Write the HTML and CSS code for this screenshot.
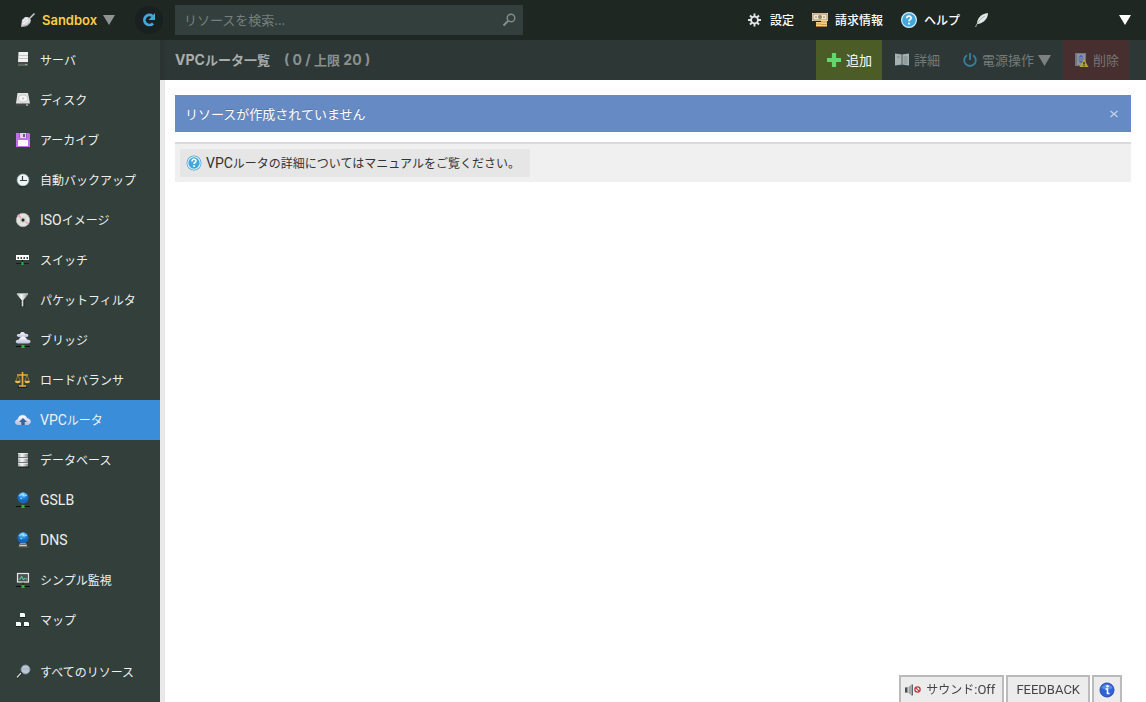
FILE: index.html
```html
<!DOCTYPE html>
<html lang="ja">
<head>
<meta charset="utf-8">
<title>VPCルータ一覧</title>
<link rel="stylesheet" href="styles.css">
</head>
<body>
<header class="topbar">
  <div class="brand">
    <button class="account" type="button">
      <svg class="icon" viewBox="0 0 16 16"><path d="M14.500 1.500L9 7" stroke="#c8c8cc" stroke-width="1.600"/><path d="M2 8l3-3 3 0 3 3-1 3-3 3-6 1z" fill="#d6d6dc"/><path d="M3 9l4-3M3 12l5-4" stroke="#fff"/><path d="M1.500 14.500l5.500-1 3-3" fill="none" stroke="#96969c"/></svg>
      <span class="account-name">Sandbox</span>
      <svg class="caret" viewBox="0 0 12 12"><path d="M0 1h12L6 11z" fill="#8f9492"/></svg>
    </button>
    <button class="reload" type="button" aria-label="更新">
      <svg class="icon" viewBox="0 0 16 16"><path d="M12 11.500A5 5 0 1 1 11.500 4" fill="none" stroke="#43a8d9" stroke-width="2.800"/><path d="M14 1v7H7.500z" fill="#43a8d9"/></svg>
    </button>
  </div>
  <div class="search">
    <input class="search-input" type="text" placeholder="リソースを検索..." aria-label="リソースを検索">
    <svg class="search-icon" viewBox="0 0 14 14"><circle cx="9" cy="5" r="3.800" fill="none" stroke="#858b89" stroke-width="1.400"/><path d="M6 8L1.500 12.500" stroke="#858b89" stroke-width="2.200"/></svg>
  </div>
  <nav class="menu" aria-label="メニュー">
    <a class="menu-link" href="#"><svg class="icon" viewBox="0 0 16 16"><circle cx="7.500" cy="8" r="3.400" fill="none" stroke="#e4e4e8" stroke-width="1.800"/><path d="M7.500 1.500v3M7.500 11.500v3M1 8h3M11 8h3M3 3.500l2 2M10 10.500l2 2M3 12.500l2-2M10 5.500l2-2" stroke="#e4e4e8" stroke-width="1.900"/></svg>設定</a>
    <a class="menu-link" href="#"><svg class="icon" viewBox="0 0 16 16"><path d="M0 1h16v8H0z" fill="#f3e5cc"/><path d="M1 2h14v6H1z" fill="none" stroke="#a88b66"/><circle cx="8" cy="5" r="2" fill="#9b8364"/><path d="M3 5h2M11 5h2" stroke="#9b8364"/><path d="M4 10h6v4H4zM9 8h6v6H9z" fill="#f5d08a"/><path d="M4 12h5M9 10h6M9 12.500h6M4 14.500h11" stroke="#c08a3a" stroke-width=".8"/></svg>請求情報</a>
    <a class="menu-link" href="#"><svg class="icon" viewBox="0 0 16 16"><use href="#help"/></svg>ヘルプ</a>
    <a class="menu-feather" href="#" aria-label="お知らせ"><svg class="icon" viewBox="0 0 16 16"><path d="M3 12C3 6 7 2 14 1c0 5-4 10-10 11z" fill="#e3e8e8"/><path d="M1.500 15C3.500 10 7 6 11 4" fill="none" stroke="#a3afad"/></svg></a>
  </nav>
  <button class="expand" type="button" aria-label="メニューを開く"><svg class="caret" viewBox="0 0 12 12"><path d="M0 1h12L6 11z" fill="#fff"/></svg></button>
</header>

<svg class="defs" aria-hidden="true">
  <defs>
    <linearGradient id="metal"><stop offset="0" stop-color="#a4a4a8"/><stop offset=".4" stop-color="#fafafa"/><stop offset="1" stop-color="#85858b"/></linearGradient>
    <linearGradient id="cloud" x2="0" y2="1"><stop offset="0" stop-color="#fff"/><stop offset="1" stop-color="#bcbcdc"/></linearGradient>
    <radialGradient id="globe" cx=".5" cy=".2"><stop offset="0" stop-color="#b5e7ff"/><stop offset=".5" stop-color="#359ff0"/><stop offset="1" stop-color="#1668bf"/></radialGradient>
    <g id="help"><circle cx="8" cy="8" r="7.400" fill="#43a8d9" stroke="#cfeefa" stroke-width="1.200"/><path d="M5.800 6.300c0-3 4.400-2.800 4.400-.300C10.200 7.500 8 7.500 8 9.300" fill="none" stroke="#fff" stroke-width="1.700"/><circle cx="8" cy="11.600" r="1.100" fill="#fff"/></g>
    <g id="link"><path d="M1 14.500h14" stroke="#0a100e"/><rect x="6.500" y="13" width="3" height="3" fill="#15c52e"/></g>
  </defs>
</svg>

<div class="layout">
  <nav class="sidebar" aria-label="リソース">
    <a class="item" href="#"><svg class="icon" viewBox="0 0 16 16"><path d="M3.500 0H13v11H3z" fill="#f0f0f0"/><path d="M4 3.500h9M4 6.500h9" stroke="#c5c5c5"/><path d="M3 10h10v4H3z" fill="#606362"/><path d="M3 11h10" stroke="#333736"/><path d="M10 12h2v1h-2z" fill="#79bd78"/></svg>サーバ</a>
    <a class="item" href="#"><svg class="icon" viewBox="0 0 16 16"><path d="M2.500 1h10.500l2 10.500H1z" fill="#e2e2e3"/><ellipse cx="8" cy="6.500" rx="4.500" ry="3.500" fill="#f5f5f5" stroke="#bcbcbc" stroke-width=".7"/><circle cx="8" cy="6.500" r="1.200" fill="#ccc"/><path d="M1 12h14v2H1z" fill="#404543"/><path d="M11 13h2" stroke="#ddd"/></svg>ディスク</a>
    <a class="item" href="#"><svg class="icon" viewBox="0 0 16 16"><path d="M1 1h13l1 1v13H1z" fill="#bf72e8"/><path d="M4 1h8v5H4z" fill="#a35bc9"/><path d="M5 1h6v5H5z" fill="#dfd2e7"/><path d="M8 2h2v3H8z" fill="#775790"/><path d="M3 8h10v6H3z" fill="#fff"/></svg>アーカイブ</a>
    <a class="item" href="#"><svg class="icon" viewBox="0 0 16 16"><circle cx="8" cy="8" r="5.900" fill="#eef5f5" stroke="#a9b8b7" stroke-width=".8"/><path d="M7.500 4v4.500H12M5 8.500h2" fill="none" stroke="#35413f" stroke-width="1.200"/><path d="M4 14.800h8" stroke="#202a28"/></svg>自動バックアップ</a>
    <a class="item" href="#"><svg class="icon" viewBox="0 0 16 16"><circle cx="8" cy="8" r="6.700" fill="#e4e4e2" stroke="#aeb2b0" stroke-width=".8"/><path d="M8 8L2 4l2-2zM8 8l5 5 1-2z" fill="#eda4c4"/><path d="M8 8l3-6 2 2zM8 8l-4 5-1-2z" fill="#d4e4c3"/><circle cx="8" cy="8" r="2.800" fill="#c7c9c7"/><circle cx="8" cy="8" r="1.500" fill="#202826"/></svg><span class="latin">ISO</span>イメージ</a>
    <a class="item" href="#"><svg class="icon" viewBox="0 0 16 16"><path d="M1 3h13v5H1z" fill="#fff"/><path d="M2.500 5H4v2H2.500zM5.500 5H7v2H5.500zM8.500 5H10v2H8.500zM11.500 5H13v2h-1.500z" fill="#3c4542"/><path d="M7.500 8v3M1 11.500h13" stroke="#151c19"/><path d="M6.500 10h2v3h-2z" fill="#15c52e"/></svg>スイッチ</a>
    <a class="item" href="#"><svg class="icon" viewBox="0 0 16 16"><path d="M7.500 7v8" stroke="#111817" stroke-width="3.600"/><path d="M1.500 2h12L8.500 8h-2z" fill="url(#metal)"/><path d="M7.500 7v7.500" stroke="#d7d7dc" stroke-width="1.800"/><path d="M2 1.800h11" stroke="#ddd"/></svg>パケットフィルタ</a>
    <a class="item" href="#"><svg class="icon" viewBox="0 0 16 16"><use href="#link"/><path d="M3 5c-3-3 0-3 2-3 1-3 5-2 5 0 4-1 4 3 2 3z" fill="url(#cloud)"/><path d="M3 11.500c-4-1-2-4 1-4 1-4 7-4 8 0 5 0 4 4 1 4z" fill="url(#cloud)"/></svg>ブリッジ</a>
    <a class="item" href="#"><svg class="icon" viewBox="0 0 16 16"><path d="M7.500 0v14M4 14h7M2 3h11" stroke="#e8ad39" stroke-width="1.700"/><path d="M3 3L.8 9h4.400zM12 3l-2.200 6h4.400z" fill="none" stroke="#a98434" stroke-width=".8"/><path d="M0 9h5.500c0 3-5.500 3-5.500 0M9.500 9H15c0 3-5.500 3-5.500 0" fill="#eebc55"/><path d="M3 15.500h9" stroke="#17201d"/></svg>ロードバランサ</a>
    <a class="item active" href="#" aria-current="page"><svg class="icon" viewBox="0 0 16 16"><path d="M3 12.500c-4 0-3-5 0-5 0-5 8-6 9-1 5 0 4 6 1 6z" fill="url(#cloud)" stroke="#ece8f3" stroke-width=".5"/><path d="M8 6L12 10H9.700v3H6.300v-3H4z" fill="#35639f"/></svg><span class="latin">VPC</span>ルータ</a>
    <a class="item" href="#"><svg class="icon" viewBox="0 0 16 16"><path d="M3 1h10v14H3z" fill="url(#metal)"/><path d="M3 5.500h10M3 10.500h10" stroke="#74797a"/><path d="M3 1.500h10M3 6.500h10M3 11.500h10" stroke="#eee" stroke-width=".7"/><path d="M3 15h11" stroke="#171e1c"/></svg>データベース</a>
    <a class="item" href="#"><svg class="icon" viewBox="0 0 16 16"><use href="#link"/><circle cx="8" cy="5.800" r="5.600" fill="url(#globe)"/><path d="M4 4l3-2 2 2 3-1M5 6l2 1" fill="none" stroke="#a9dcff"/></svg><span class="latin">GSLB</span></a>
    <a class="item" href="#"><svg class="icon" viewBox="0 0 16 16"><circle cx="8" cy="5.800" r="5.600" fill="url(#globe)"/><path d="M4 4l3-2 2 2 3-1M5 6l2 1" fill="none" stroke="#a9dcff"/><path d="M5 11.500h6l1 3H4z" fill="#e8e5e0"/><path d="M5 12.700h6M3 15h11" stroke="#555a58"/></svg><span class="latin">DNS</span></a>
    <a class="item" href="#"><svg class="icon" viewBox="0 0 16 16"><use href="#link"/><rect x="2.500" y="1.500" width="11" height="8.500" fill="#505356" stroke="#e6e6e6" stroke-width="1.200"/><path d="M3.500 7h2l1-3 2 4 1-2 1 1h2" fill="none" stroke="#57d3a1"/><path d="M8 10.500v2.500" stroke="#1a211f"/></svg>シンプル監視</a>
    <a class="item" href="#"><svg class="icon" viewBox="0 0 16 16"><path d="M5 1h4l1 1v3H5zM1 10h4l1 1v3H1zM9 10h4l1 1v3H9z" fill="#f6fffd"/><path d="M5 5.500h6M1 14.500h6M9 14.500h6" stroke="#1a2421"/></svg>マップ</a>
    <a class="item all" href="#"><svg class="icon" viewBox="0 0 16 16"><path d="M7 8L2 14" stroke="#171e1b" stroke-width="2.500"/><path d="M6 9L2 13.500" stroke="#d4d6d7" stroke-width="1.300"/><circle cx="10.500" cy="5.500" r="4.400" fill="#b8c8d5" stroke="#8b98a1"/><path d="M7.500 5h6" stroke="#a0b3c2"/></svg>すべてのリソース</a>
  </nav>

  <main class="main">
    <div class="toolbar">
      <h1 class="title"><span class="latin-title">VPC</span>ルータ一覧<span class="count"><span class="latin-title">( 0 / </span>上限<span class="latin-title"> 20 )</span></span></h1>
      <div class="actions">
        <button class="action add" type="button"><svg class="icon" viewBox="0 0 16 16"><path d="M8 1v14M1 8h14" stroke="#62d76d" stroke-width="4.200"/></svg>追加</button>
        <button class="action off" type="button" disabled><svg class="icon" viewBox="0 0 16 16"><path d="M0 2h2v12h14V3" fill="#283e46"/><path d="M1 1.500l7 1 7-1v12l-7-1-7 1z" fill="#a6b0b0"/><path d="M8 2.500v10" stroke="#485858"/><path d="M9.500 5h4M9.500 7h4M9.500 9h4M9.500 11h4M3 5h3" stroke="#71817e" stroke-width=".8"/></svg>詳細</button>
        <button class="action off" type="button" disabled><svg class="icon" viewBox="0 0 16 16"><path d="M5 3.200a5.800 5.800 0 1 0 6 0M8 1v7" fill="none" stroke="#357e9c" stroke-width="1.900"/></svg>電源操作<svg class="caret wide" viewBox="0 0 12 12"><path d="M0 1h12L6 11z" fill="#7c817f"/></svg></button>
        <button class="action delete" type="button" disabled><svg class="icon" viewBox="0 0 16 16"><path d="M2 1h11v13H2z" fill="#75777c"/><path d="M4 2h8v11H4z" fill="#8990a0"/><path d="M8 3l2 2H6zM8 11L6 9h4zM5 7h6" fill="#4d68a6" stroke="#4d68a6" stroke-width=".7"/><path d="M11 7l4.500 8h-9z" fill="#b3a236"/><path d="M11 10v2.500M11 13.200v1" stroke="#292819" stroke-width="1.300"/></svg>削除</button>
      </div>
    </div>
    <div class="content">
      <div class="notice" role="status"><span>リソースが作成されていません</span><button class="close" type="button" aria-label="閉じる"><svg class="close-icon" viewBox="0 0 8 8"><path d="M.5 1l7 6M7.500 1l-7 6" stroke="#c5d4ec" stroke-width="1.200"/></svg></button></div>
      <div class="manual"><a class="manual-link" href="#"><svg class="icon" viewBox="0 0 16 16"><circle cx="8" cy="8" r="7.500" fill="#43a8d9"/><circle cx="8" cy="8" r="6.200" fill="#43a8d9" stroke="#e6f4fa" stroke-width="1.100"/><path d="M6 6.500c0-3 4-2.700 4-.500C10 7.500 8 7.500 8 9" fill="none" stroke="#fff" stroke-width="1.600"/><circle cx="8" cy="11" r="1" fill="#fff"/></svg><span><span class="latin">VPC</span>ルータの詳細についてはマニュアルをご覧ください。</span></a></div>
    </div>
  </main>
</div>

<div class="dock">
  <button class="dock-button sound" type="button"><svg class="icon" viewBox="0 0 16 16"><path d="M0 5.500h3l4-3.500v12l-4-3.500H0z" fill="#a5a8ab"/><path d="M0 5.500h3v5H0z" fill="#4a4e51"/><path d="M3 5.500v5" stroke="#eee"/><path d="M7.500 2.500v11" stroke="#606468"/><circle cx="12.500" cy="7.500" r="2.600" fill="#fff" stroke="#c3343c" stroke-width="1.300"/><path d="M10.700 5.700l3.600 3.600" stroke="#c3343c" stroke-width="1.200"/></svg><span>サウンド<span class="latin-small">:Off</span></span></button>
  <button class="dock-button feedback" type="button"><span class="latin-small">FEEDBACK</span></button>
  <button class="dock-button info" type="button" aria-label="情報"><svg class="icon" viewBox="0 0 16 16"><circle cx="8" cy="8" r="7" fill="#2d62d9" stroke="#294aa5"/><path d="M2.500 6c2-5 9-5 11 0-3 2-7 2-11 0" fill="#5d8bec"/><circle cx="8.500" cy="4.300" r="1.200" fill="#fff"/><path d="M6.500 7h2v4.500h2" fill="none" stroke="#fff" stroke-width="1.600"/></svg></button>
</div>
</body>
</html>
```

FILE: styles.css
```css
* { box-sizing: border-box; }

body {
  margin: 0;
  min-height: 100vh;
  display: flex;
  flex-direction: column;
  background: #fff;
  color: #333;
  font: 12px/20px "Noto Sans CJK JP", sans-serif;
}

button, input { font: inherit; color: inherit; }
button { padding: 0; border: 0; background: none; }
a { color: inherit; text-decoration: none; }
.icon { width: 16px; height: 16px; flex: none; }
.caret { width: 12px; height: 12px; flex: none; }
.caret.wide { width: 13px; height: 13px; }
.defs { position: absolute; width: 0; height: 0; }
.latin { font-family: Roboto, sans-serif; font-size: 14px; }
.latin-small { font-family: Roboto, sans-serif; font-size: 13px; }
.latin-title { font-family: Inter, sans-serif; font-size: 14px; }

.topbar {
  display: flex;
  align-items: center;
  height: 40px;
  background: #1f2723;
  color: #fff;
}
.brand {
  width: 175px;
  padding: 0 12px 0 20px;
  display: flex;
  align-items: center;
  justify-content: space-between;
}
.account { display: flex; align-items: center; gap: 6px; }
.account-name { color: #ffcb4a; font: 600 13px/20px Inter, sans-serif; }
.reload {
  display: flex;
  align-items: center;
  justify-content: center;
  width: 28px;
  height: 28px;
  border-radius: 50%;
  background: #1a201f;
}
.search {
  display: flex;
  align-items: center;
  width: 348px;
  height: 30px;
  padding: 0 7px 0 9px;
  background: #333f3d;
}
.search-input {
  flex: 1;
  min-width: 0;
  padding: 0;
  border: 0;
  outline: 0;
  background: none;
  font-size: 13px;
}
.search-input::placeholder { color: #757f7c; opacity: 1; }
.search-icon { width: 14px; height: 14px; }
.menu {
  display: flex;
  flex: 1;
  align-items: center;
  justify-content: flex-end;
  gap: 18px;
  font-weight: 500;
}
.menu-link { display: flex; align-items: center; gap: 7px; }
.menu-feather { display: flex; margin-left: -4px; }
.expand { display: flex; margin: 0 15px 0 129px; }

.layout { display: flex; flex: 1; }
.sidebar { width: 160px; background: #323f3b; color: #eef0ef; }
.item {
  display: flex;
  align-items: center;
  height: 40px;
  padding-left: 15px;
}
.item .icon { margin-right: 9px; }
.item.active { background: #3a8dd8; }
.item.all { margin-top: 12px; }

.main { flex: 1; min-width: 0; display: flex; flex-direction: column; }
.toolbar {
  display: flex;
  align-items: center;
  justify-content: space-between;
  height: 40px;
  padding: 0 17px 0 10px;
  border-left: 5px solid #2b3432;
  background: #2d3836;
}
.title { margin: 0; color: #aaadac; font-size: 13px; line-height: 20px; font-weight: 700; white-space: pre; }
.count { margin-left: 14px; color: #8b908e; }
.actions { display: flex; }
.action {
  display: flex;
  align-items: center;
  gap: 4px;
  height: 40px;
  padding: 0 10px;
  font-size: 13px;
}
.add { background: #4c5c27; color: #fff; }
.off { color: #747a78; padding: 0 12px; }
.off + .off { padding: 0 12px 0 10px; }
.delete { background: #462f2e; color: #777675; }

.content { flex: 1; padding: 15px; padding-left: 10px; border-left: 5px solid #e9e9e9; }
.notice {
  display: flex;
  align-items: center;
  justify-content: space-between;
  height: 37px;
  padding: 0 13px 0 10px;
  background: #668bc4;
  color: #fff;
  font-size: 13px;
  text-shadow: 0 -1px 0 #55749f;
}
.close { display: flex; }
.close-icon { width: 8px; height: 8px; }
.manual {
  display: flex;
  margin-top: 10px;
  padding: 5px;
  border-top: 2px solid #d9d9d9;
  background: #f0f0f0;
}
.manual-link {
  display: flex;
  align-items: center;
  gap: 4px;
  height: 28px;
  padding: 0 10px 0 6px;
  background: #e6e6e6;
}

.dock { position: fixed; right: 24px; bottom: 0; display: flex; gap: 2px; }
.dock-button {
  display: flex;
  align-items: center;
  height: 27px;
  padding: 0 8px;
  border: 2px solid #bbb;
  border-bottom: 0;
  background: #ececec;
  color: #444;
}
.sound { gap: 5px; padding: 0 7px 0 4px; }
.info { padding: 0 5px; }
```
